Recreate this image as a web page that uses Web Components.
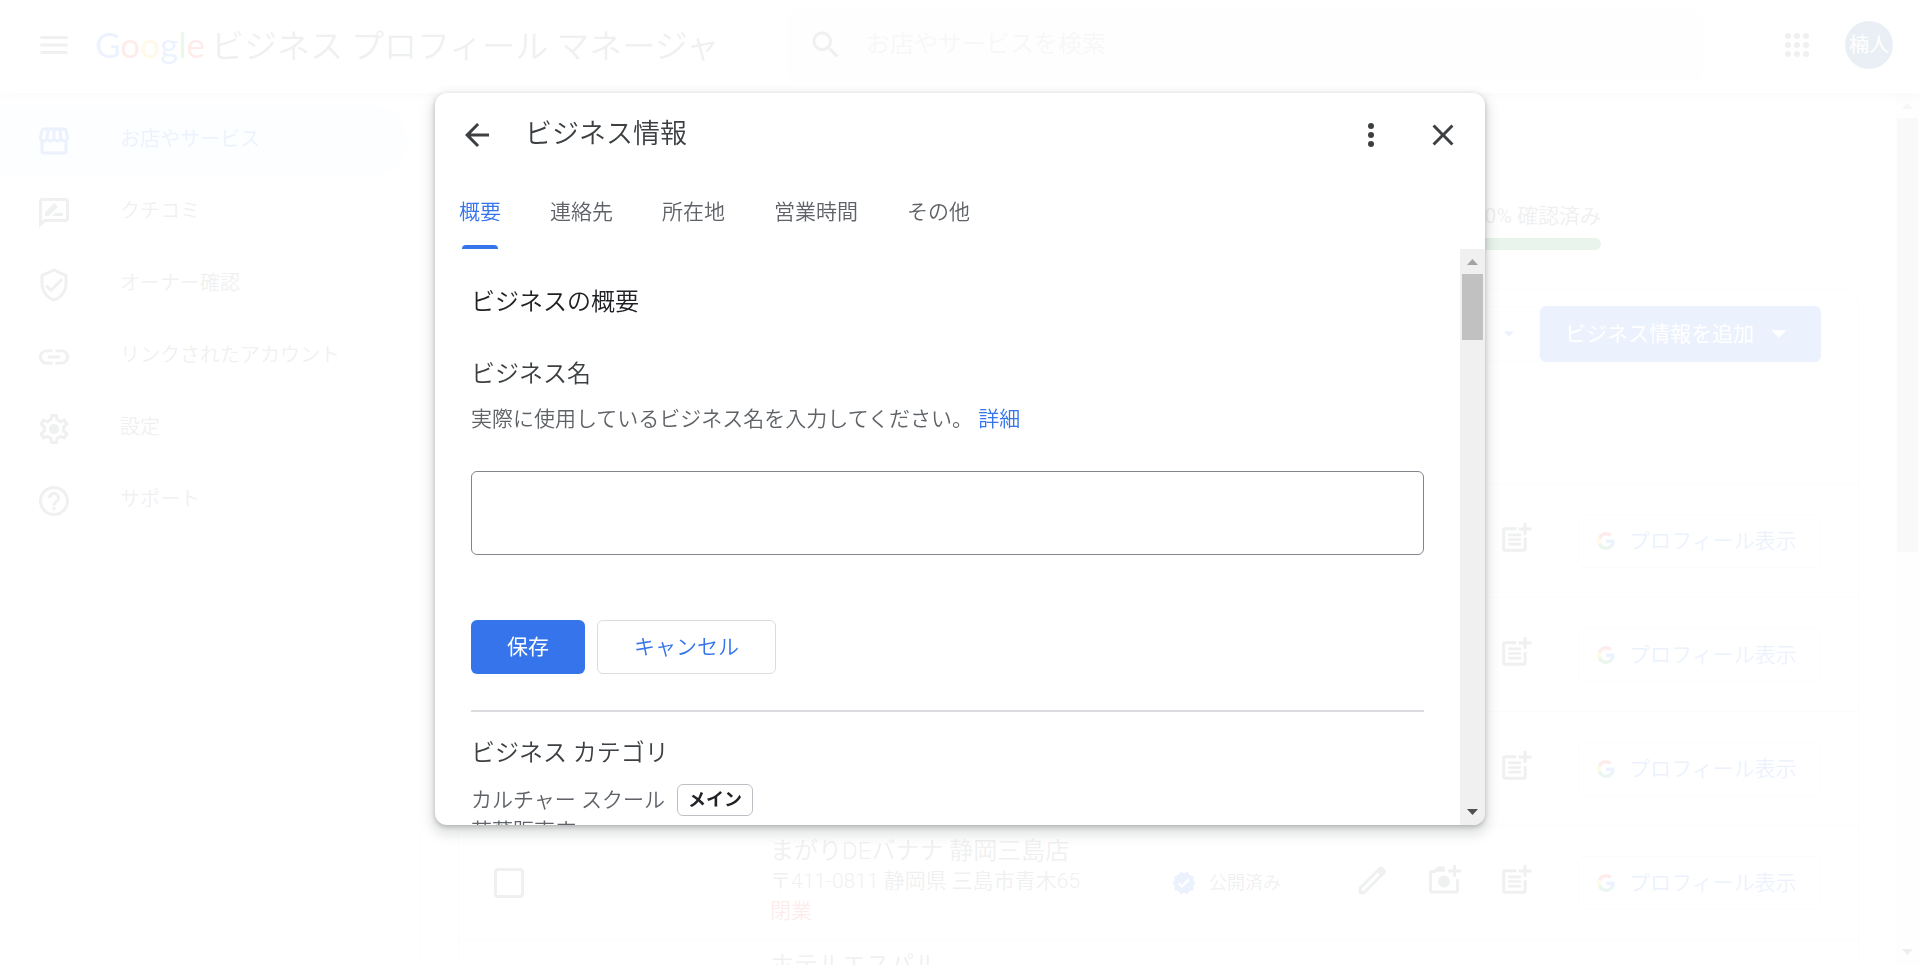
<!DOCTYPE html>
<html lang="ja">
<head>
<meta charset="utf-8">
<title>Google ビジネス プロフィール マネージャ</title>
<style>
html, body { margin: 0; height: 100%; overflow: hidden; background: #fff; }
body { font-family: Roboto, "Noto Sans CJK JP", sans-serif; font-weight: 350; font-size: 21px; line-height: 30px; color: #5f6368; }
</style>
</head>
<body>
<business-app></business-app>

<script>
const ICONS = {
  menu: '<path d="M3 18h18v-2H3v2zm0-5h18v-2H3v2zm0-7v2h18V6H3z"/>',
  search: '<path d="M15.5 14h-.79l-.28-.27C15.41 12.59 16 11.11 16 9.5 16 5.91 13.09 3 9.5 3S3 5.91 3 9.5 5.91 16 9.5 16c1.61 0 3.09-.59 4.23-1.57l.27.28v.79l5 4.99L20.49 19l-4.99-5zm-6 0C7.01 14 5 11.99 5 9.5S7.01 5 9.5 5 14 7.01 14 9.5 11.99 14 9.5 14z"/>',
  apps: [6, 12, 18].map(y => [6, 12, 18].map(x => `<circle cx="${x}" cy="${y}" r="2"/>`).join('')).join(''),
  store: '<path d="M21.9 8.89l-1.05-4.37c-.22-.9-1-1.52-1.91-1.52H5.05c-.9 0-1.69.63-1.9 1.52L2.1 8.89c-.24 1.02-.02 2.06.62 2.88.08.11.19.19.28.29V19c0 1.1.9 2 2 2h14c1.1 0 2-.9 2-2v-6.94c.09-.09.2-.18.28-.28.64-.82.87-1.87.62-2.89zm-2.99-3.9l1.05 4.37c.1.42.01.84-.25 1.17-.14.18-.44.47-.94.47-.61 0-1.14-.49-1.21-1.14L16.98 5l1.93-.01zM13 5h1.96l.54 4.52c.05.39-.07.78-.33 1.07-.22.26-.54.41-.95.41-.67 0-1.22-.59-1.22-1.31V5zM8.49 9.52L9.04 5H11v4.69c0 .72-.55 1.31-1.29 1.31-.34 0-.65-.15-.89-.41-.25-.29-.37-.68-.33-1.07zm-4.45-.16L5.05 5h1.97l-.58 4.86c-.08.65-.6 1.14-1.21 1.14-.49 0-.8-.29-.93-.47-.27-.32-.36-.75-.26-1.17zM5 19v-6.03c.08.01.15.03.23.03.87 0 1.66-.36 2.24-.95.6.6 1.4.95 2.31.95.87 0 1.65-.36 2.23-.93.59.57 1.39.93 2.29.93.84 0 1.64-.35 2.24-.95.58.59 1.37.95 2.24.95.08 0 .15-.02.23-.03V19H5z"/>',
  review: '<path d="M20 2H4c-1.1 0-2 .9-2 2v18l4-4h14c1.1 0 2-.9 2-2V4c0-1.1-.9-2-2-2zm0 14H5.17L4 17.17V4h16v12zM10.5 14H18v-2h-5.5l-2 2zM14.36 8.13c.2-.2.2-.51 0-.71l-1.77-1.77c-.2-.2-.51-.2-.71 0L6 11.53V14h2.47l5.89-5.87z"/>',
  shield: '<path d="M12 1L3 5v6c0 5.55 3.84 10.74 9 12 5.16-1.26 9-6.45 9-12V5l-9-4zm7 10c0 4.52-2.98 8.69-7 9.93-4.02-1.23-7-5.41-7-9.93V6.3l7-3.11 7 3.11V11zm-11.59.59L6 13l4 4 8-8-1.41-1.42L10 14.17z"/>',
  link: '<path d="M3.9 12c0-1.71 1.39-3.1 3.1-3.1h4V7H7c-2.76 0-5 2.24-5 5s2.24 5 5 5h4v-1.9H7c-1.71 0-3.1-1.39-3.1-3.1zM8 13h8v-2H8v2zm9-6h-4v1.9h4c1.71 0 3.1 1.39 3.1 3.1s-1.39 3.1-3.1 3.1h-4V17h4c2.76 0 5-2.24 5-5s-2.24-5-5-5z"/>',
  settings: '<path d="M19.43 12.98c.04-.32.07-.64.07-.98 0-.34-.03-.66-.07-.98l2.11-1.65c.19-.15.24-.42.12-.64l-2-3.46c-.09-.16-.26-.25-.44-.25-.06 0-.12.01-.17.03l-2.49 1c-.52-.4-1.08-.73-1.69-.98l-.38-2.65C14.46 2.18 14.25 2 14 2h-4c-.25 0-.46.18-.49.42l-.38 2.65c-.61.25-1.17.59-1.69.98l-2.49-1c-.06-.02-.12-.03-.18-.03-.17 0-.34.09-.43.25l-2 3.46c-.13.22-.07.49.12.64l2.11 1.65c-.04.32-.07.65-.07.98 0 .33.03.66.07.98l-2.11 1.65c-.19.15-.24.42-.12.64l2 3.46c.09.16.26.25.44.25.06 0 .12-.01.17-.03l2.49-1c.52.4 1.08.73 1.69.98l.38 2.65c.03.24.24.42.49.42h4c.25 0 .46-.18.49-.42l.38-2.65c.61-.25 1.17-.59 1.69-.98l2.49 1c.06.02.12.03.18.03.17 0 .34-.09.43-.25l2-3.46c.12-.22.07-.49-.12-.64l-2.11-1.65zm-1.98-1.71c.04.31.05.52.05.73 0 .21-.02.43-.05.73l-.14 1.13.89.7 1.08.84-.7 1.21-1.27-.51-1.04-.42-.9.68c-.43.32-.84.56-1.25.73l-1.06.43-.16 1.13-.2 1.35h-1.4l-.19-1.35-.16-1.13-1.06-.43c-.43-.18-.83-.41-1.23-.71l-.91-.7-1.06.43-1.27.51-.7-1.21 1.08-.84.89-.7-.14-1.13c-.03-.31-.05-.54-.05-.74s.02-.43.05-.73l.14-1.13-.89-.7-1.08-.84.7-1.21 1.27.51 1.04.42.9-.68c.43-.32.84-.56 1.25-.73l1.06-.43.16-1.13.2-1.35h1.39l.19 1.35.16 1.13 1.06.43c.43.18.83.41 1.23.71l.91.7 1.06-.43 1.27-.51.7 1.21-1.07.85-.89.7.14 1.13z"/><circle cx="12" cy="12" r="3.4"/>',
  help: '<path d="M11 18h2v-2h-2v2zm1-16C6.48 2 2 6.48 2 12s4.48 10 10 10 10-4.48 10-10S17.52 2 12 2zm0 18c-4.41 0-8-3.59-8-8s3.59-8 8-8 8 3.59 8 8-3.59 8-8 8zm0-14c-2.21 0-4 1.79-4 4h2c0-1.1.9-2 2-2s2 .9 2 2c0 2-3 1.75-3 5h2c0-2.25 3-2.5 3-5 0-2.21-1.79-4-4-4z"/>',
  edit: '<path d="M4.2 20.3v-3L17 4.5a1.3 1.3 0 0 1 1.8 0l1 1a1.3 1.3 0 0 1 0 1.8l-13 13z" fill="none" stroke="currentColor" stroke-width="2"/><path d="M15.2 6.3l2.7-2.6 2.6 2.6-2.6 2.7z"/>',
  photo: '<path d="M12.6 5.5h-6L5.9 6.3H3.7a.7.7 0 0 0-.7.7v12.3a.7.7 0 0 0 .7.7h16.6a.7.7 0 0 0 .7-.7v-7.8" fill="none" stroke="currentColor" stroke-width="2"/><path d="M7.5 3h4.8v3H6z"/><circle cx="12" cy="13" r="4"/><path d="M18 2h2v3h3.500v2H20v3h-2V7h-3.200V5H18z"/>',
  post: '<path d="M12.2 5.8H4.7a.9.9 0 0 0-.9.9v12.5a.9.9 0 0 0 .9.9h12.5a.9.9 0 0 0 .9-.9V12" fill="none" stroke="currentColor" stroke-width="2"/><path d="M6.8 9h8.500v1.800H6.800zM6.800 12.100h8.500v1.800H6.800zM6.800 15.200h8.500V17H6.800zM17 2h2v3h3.300v2H19v3h-2V7h-3.200V5H17z"/>',
  verified: '<path d="M23 12l-2.44-2.79.34-3.69-3.61-.82-1.89-3.2L12 2.960 8.600 1.500 6.710 4.690 3.100 5.500l.34 3.700L1 12l2.440 2.790-.34 3.700 3.610.82L8.600 22.500l3.400-1.470 3.400 1.460 1.890-3.190 3.610-.82-.34-3.690L23 12zm-12.910 4.720l-3.800-3.810 1.480-1.480 2.320 2.330 5.850-5.870 1.480 1.480-7.330 7.350z"/>',
  back: '<path d="M20 11H7.830l5.590-5.590L12 4l-8 8 8 8 1.410-1.410L7.830 13H20v-2z"/>',
  more: '<circle cx="12" cy="6" r="2"/><circle cx="12" cy="12" r="2"/><circle cx="12" cy="18" r="2"/>',
  close: '<path d="M19 6.410L17.590 5 12 10.590 6.410 5 5 6.410 10.590 12 5 17.590 6.410 19 12 13.410 17.590 19 19 17.590 13.410 12z"/>',
  caret: '<path d="M7 9.500l5 5 5-5z"/>',
  google: '<g transform="scale(.5)"><path fill="#EA4335" d="M24 9.500c3.540 0 6.710 1.220 9.210 3.600l6.850-6.850C35.900 2.380 30.470 0 24 0 14.620 0 6.510 5.380 2.560 13.220l7.980 6.190C12.430 13.720 17.740 9.500 24 9.500z"/><path fill="#4285F4" d="M46.980 24.550c0-1.570-.15-3.090-.38-4.550H24v9.020h12.940c-.58 2.960-2.260 5.480-4.780 7.180l7.730 6c4.510-4.180 7.090-10.360 7.090-17.650z"/><path fill="#FBBC05" d="M10.530 28.590c-.48-1.450-.76-2.990-.76-4.590s.27-3.140.76-4.590l-7.980-6.190C.92 16.460 0 20.120 0 24c0 3.880.92 7.540 2.560 10.780l7.970-6.190z"/><path fill="#34A853" d="M24 48c6.480 0 11.930-2.130 15.890-5.810l-7.730-6c-2.150 1.450-4.920 2.300-8.160 2.300-6.260 0-11.570-4.220-13.470-9.910l-7.980 6.190C6.510 42.620 14.620 48 24 48z"/></g>'
};

const RESET = `
  *, *::before, *::after { box-sizing: border-box; }
  button, input { font: inherit; color: inherit; background: none; border: 0; margin: 0; padding: 0; }
  button { display: inline-flex; align-items: center; justify-content: center; white-space: nowrap; cursor: pointer; }
  a { color: inherit; text-decoration: none; }
  h1, h2, h3, p { margin: 0; font-weight: inherit; }
`;

function define(name, css, html) {
  customElements.define(name, class extends HTMLElement {
    connectedCallback() {
      if (this.shadowRoot) return;
      const template = document.createElement('template');
      template.innerHTML = `<style>${RESET}${css}</style>${typeof html === 'function' ? html(this) : html}`;
      this.attachShadow({ mode: 'open' }).append(template.content.cloneNode(true));
    }
  });
}

define('ui-icon', `
  :host { display: block; flex: none; width: 36px; height: 36px; }
  svg { display: block; width: 100%; height: 100%; fill: currentColor; }
`, el => `<svg viewBox="0 0 24 24" aria-hidden="true">${ICONS[el.getAttribute('name')]}</svg>`);

define('scroll-track', `
  :host { display: flex; flex-direction: column; flex: none; width: 25px; background: #f0f0f0; padding: 0 2px; }
  svg { display: block; flex: none; width: 21px; height: 25px; }
  .thumb { flex: none; height: var(--thumb, 20%); background: #c1c1c1; }
  .rest { flex: 1; }
`, `
  <svg viewBox="0 0 21 25"><path fill="#a3a3a3" d="M5 16l5.500-6 5.500 6z"/></svg>
  <div class="thumb"></div><div class="rest"></div>
  <svg viewBox="0 0 21 25"><path fill="#505050" d="M5 9l5.500 6 5.500-6z"/></svg>
`);

define('app-header', `
  :host { display: flex; align-items: center; height: 93px; padding: 0 27px 3px 36px; background: #fff; position: relative; box-shadow: 0 2px 12px rgba(60,64,67,.3); }
  .brand { display: flex; align-items: baseline; gap: 6px; margin-left: 23px; width: 691px; font-size: 33px; line-height: 48px; white-space: nowrap; }
  .logo { font-family: Lato, sans-serif; font-weight: 400; font-size: 35px; }
  .b { color: #4285f4; } .r { color: #ea4335; } .y { color: #fbbc05; } .g { color: #34a853; }
  .search { flex: 0 1 918px; display: flex; align-items: center; gap: 22px; height: 72px; padding: 0 22px; border-radius: 12px; background: #f1f3f4; font-size: 24px; }
  .search input { flex: 1; min-width: 0; outline: 0; height: 48px; padding-bottom: 3px; }
  .search input::placeholder { color: #aaa; opacity: 1; }
  .end { display: flex; align-items: center; gap: 30px; margin-left: auto; }
  .avatar { width: 48px; height: 48px; border-radius: 50%; background: #2a5f9b; color: #fff; font-size: 20px; font-weight: 400; }
`, `
  <button aria-label="メニュー"><ui-icon name="menu"></ui-icon></button>
  <h1 class="brand"><span class="logo"><span class="b">G</span><span class="r">o</span><span class="y">o</span><span class="b">g</span><span class="g">l</span><span class="r">e</span></span><span>ビジネス プロフィール マネージャ</span></h1>
  <label class="search"><ui-icon name="search"></ui-icon><input type="text" placeholder="お店やサービスを検索"></label>
  <div class="end">
    <button aria-label="アプリ"><ui-icon name="apps"></ui-icon></button>
    <button class="avatar">楠人</button>
  </div>
`);

define('nav-item', `
  :host { display: block; margin-right: 13px; }
  a { display: flex; align-items: center; gap: 48px; height: 72px; padding-left: 36px; border-radius: 0 36px 36px 0; font-size: 20px; line-height: 24px; white-space: nowrap; }
  span { padding-bottom: 4px; }
  :host([active]) a { background: #e8f0fe; color: #3574ea; }
`, el => `<a href="#"><ui-icon name="${el.getAttribute('icon')}"></ui-icon><span><slot></slot></span></a>`);

define('side-nav', `
  :host { display: block; flex: none; width: 421px; padding-top: 12px; border-right: 1px solid #e8eaed; }
`, `
  <nav>
    <nav-item icon="store" active>お店やサービス</nav-item>
    <nav-item icon="review">クチコミ</nav-item>
    <nav-item icon="shield">オーナー確認</nav-item>
    <nav-item icon="link">リンクされたアカウント</nav-item>
    <nav-item icon="settings">設定</nav-item>
    <nav-item icon="help">サポート</nav-item>
  </nav>
`);

const row = (name = '', address = '', state = '', status = false) => `
  <tr>
    <td><input type="checkbox" aria-label="選択"></td>
    <td><div class="name">${name}</div><div>${address}</div><div class="closed">${state}</div></td>
    <td>${status ? '<div class="status"><ui-icon name="verified"></ui-icon>公開済み</div>' : ''}</td>
    <td><div class="tools">
      <button aria-label="編集"><ui-icon name="edit"></ui-icon></button>
      <button aria-label="写真を追加"><ui-icon name="photo"></ui-icon></button>
      <button aria-label="投稿を作成"><ui-icon name="post"></ui-icon></button>
    </div></td>
    <td><button class="profile"><ui-icon name="google"></ui-icon>プロフィール表示</button></td>
  </tr>`;

define('location-list', `
  :host { display: flex; flex: 1; min-width: 0; overflow: hidden; }
  .page { flex: 1; min-width: 0; padding: 108px 36px 0 37px; }
  .progress { width: 360px; margin-left: 783px; text-align: right; height: 88px; font-weight: 400; }
  .bar { height: 12px; border-radius: 6px; background: #1e8e3e; margin-top: 7px; }
  .card { border: 1px solid #dadce0; border-radius: 12px; }
  .toolbar { display: flex; justify-content: flex-end; align-items: flex-start; height: 193px; padding: 16px 37px 0 0; }
  .filter { width: 160px; height: 56px; border: 1px solid #dadce0; border-radius: 6px; color: #3574ea; justify-content: flex-end; padding-right: 18px; }
  .filter ui-icon { width: 24px; height: 24px; }
  .add { justify-content: flex-start; width: 281px; height: 56px; padding-left: 25px; border-radius: 6px; background: #3574ea; color: #fff; font-weight: 400; gap: 7px; }
  table { width: 100%; table-layout: fixed; border-collapse: collapse; }
  td { height: 114px; padding: 0; border-top: 1px solid #dadce0; white-space: nowrap; }
  td:nth-child(1) { padding-left: 35px; }
  td:nth-child(2) { padding-bottom: 4px; }
  .c1 { width: 311px; } .c3 { width: 183px; } .c4 { width: 224px; } .c5 { width: 280px; }
  input { appearance: none; display: block; width: 30px; height: 30px; border: 3px solid #5f6368; border-radius: 4px; }
  .name { font-size: 24px; }
  .closed { color: #ea4335; }
  .status { display: flex; align-items: center; gap: 12px; font-size: 18px; }
  .status ui-icon { width: 26px; height: 26px; color: #3574ea; }
  .tools { display: flex; gap: 36px; padding-bottom: 6px; }
  .profile { justify-content: flex-start; width: 243px; height: 54px; padding-left: 18px; border: 1px solid #dadce0; border-radius: 6px; color: #3574ea; gap: 14px; }
  .profile ui-icon { width: 18px; height: 18px; }
  scroll-track { --thumb: 434px; }
`, `
  <div class="page">
    <div class="progress">100% 確認済み<div class="bar"></div></div>
    <div class="card">
      <div class="toolbar">
        <button class="filter" aria-label="絞り込み"><ui-icon name="caret"></ui-icon></button>
        <button class="add">ビジネス情報を追加<ui-icon name="caret"></ui-icon></button>
      </div>
      <table>
        <colgroup><col class="c1"><col><col class="c3"><col class="c4"><col class="c5"></colgroup>
        <tbody>
          ${row()}${row()}${row()}
          ${row('まがりDEバナナ 静岡三島店', '〒411-0811 静岡県 三島市青木65', '閉業', true)}
          ${row('ホテルエスパル', '&nbsp;', '&nbsp;')}
        </tbody>
      </table>
    </div>
  </div>
  <scroll-track></scroll-track>
`);

define('tab-item', `
  :host { display: flex; }
  button { flex-direction: column; justify-content: space-between; height: 72px; padding-top: 20px; line-height: 30px; }
  i { display: block; height: 4px; align-self: stretch; margin: 0 3px; border-radius: 4px 4px 0 0; }
  :host([active]) { color: #3574ea; }
  :host([active]) i { background: #3574ea; }
`, `<button role="tab"><slot></slot><i></i></button>`);

define('info-dialog', `
  :host { display: flex; flex-direction: column; width: min(1050px, 100%); overflow: hidden; border-radius: 12px; background: #fff; box-shadow: 0 2px 5px rgba(60,64,67,.3), 0 6px 12px 4px rgba(60,64,67,.15); }
  header { display: flex; align-items: center; flex: none; height: 84px; padding: 0 24px; color: #3c4043; }
  h1 { flex: 1; margin-left: 30px; padding-bottom: 2px; font-size: 27px; line-height: 36px; }
  .more { margin-right: 36px; }
  .tabs { display: flex; flex: none; gap: 49px; padding: 0 24px; }
  .main { display: flex; flex: 1; min-height: 0; }
  .body { flex: 1; overflow: hidden; padding: 35px 36px 0; }
  h2, h3 { font-size: 24px; line-height: 36px; }
  h2 { color: #202124; margin-bottom: 36px; }
  h3 { color: #3c4043; }
  p { padding: 15px 0 12px; line-height: 24px; }
  .body a { color: #3574ea; }
  input { display: block; width: 100%; height: 84px; margin: 28px 0 65px; padding: 0 20px; border: 1px solid #80868b; border-radius: 6px; }
  .actions { display: flex; gap: 12px; padding-bottom: 36px; margin-bottom: 23px; border-bottom: 2px solid #dadce0; }
  .actions button { height: 54px; padding: 0 36px; border-radius: 6px; color: #3574ea; }
  .actions .save { background: #3574ea; color: #fff; font-weight: 400; }
  .actions .cancel { border: 1px solid #dadce0; }
  .category { display: flex; align-items: center; gap: 12px; height: 32px; margin-top: 13px; }
  .badge { height: 32px; padding: 0 10px; border: 1px solid #bdc1c6; border-radius: 6px; font-size: 18px; font-weight: 700; color: #202124; }
  scroll-track { --thumb: 66px; }
`, `
  <header>
    <button aria-label="戻る"><ui-icon name="back"></ui-icon></button>
    <h1>ビジネス情報</h1>
    <button class="more" aria-label="その他の操作"><ui-icon name="more"></ui-icon></button>
    <button aria-label="閉じる"><ui-icon name="close"></ui-icon></button>
  </header>
  <div class="tabs" role="tablist">
    <tab-item active>概要</tab-item><tab-item>連絡先</tab-item><tab-item>所在地</tab-item><tab-item>営業時間</tab-item><tab-item>その他</tab-item>
  </div>
  <div class="main">
    <div class="body">
      <h2>ビジネスの概要</h2>
      <h3><label for="name">ビジネス名</label></h3>
      <p>実際に使用しているビジネス名を入力してください。 <a href="#">詳細</a></p>
      <input id="name" type="text">
      <div class="actions"><button class="save">保存</button><button class="cancel">キャンセル</button></div>
      <h3>ビジネス カテゴリ</h3>
      <div class="category">カルチャー スクール<span class="badge">メイン</span></div>
      <div>茶葉販売店</div>
    </div>
    <scroll-track></scroll-track>
  </div>
`);

define('business-app', `
  :host { display: flex; flex-direction: column; height: 100vh; }
  app-header { flex: none; z-index: 1; }
  .columns { display: flex; flex: 1; min-height: 0; }
  .scrim { position: fixed; inset: 0; z-index: 2; display: flex; justify-content: center; padding: 93px 24px 140px; background: rgba(255,255,255,.9); }
`, `
  <app-header></app-header>
  <div class="columns"><side-nav></side-nav><location-list></location-list></div>
  <div class="scrim"><info-dialog role="dialog" aria-label="ビジネス情報"></info-dialog></div>
`);
</script>
</body>
</html>
